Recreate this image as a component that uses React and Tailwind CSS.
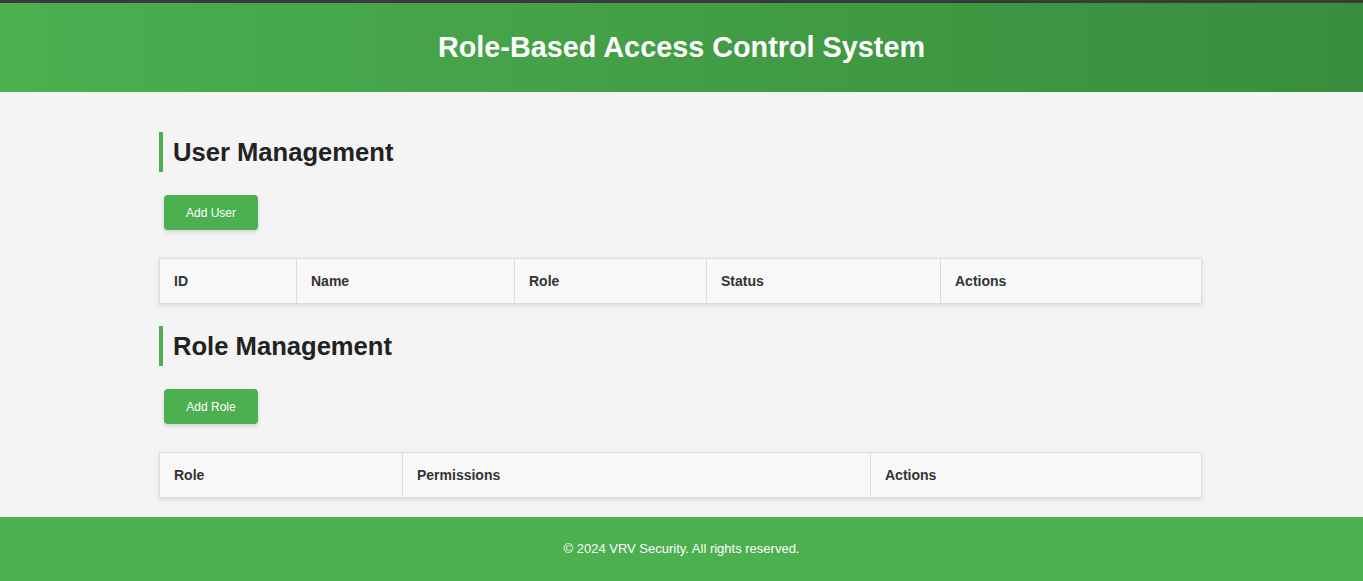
const userCols = [
  { label: 'ID', w: 'w-[137px]' },
  { label: 'Name', w: 'w-[218px]' },
  { label: 'Role', w: 'w-[192px]' },
  { label: 'Status', w: 'w-[234px]' },
  { label: 'Actions', w: '' },
]

const roleCols = [
  { label: 'Role', w: 'w-[243px]' },
  { label: 'Permissions', w: 'w-[468px]' },
  { label: 'Actions', w: '' },
]

const SectionTitle = ({ children }) => (
  <h2 className="h-[40px] flex items-center border-l-4 border-[#4CAF50] pl-[10px] text-[25.6px] font-bold text-[#222]">
    {children}
  </h2>
)

const GreenButton = ({ children }) => (
  <button className="ml-[5px] mt-[23px] h-[35px] w-[94px] rounded-[4px] bg-[#4CAF50] text-[12px] text-white shadow-[0_2px_4px_rgba(0,0,0,0.15)]">
    {children}
  </button>
)

const HeaderTable = ({ cols }) => (
  <table className="mt-[28px] w-full border-collapse bg-[#f8f8f8] shadow-[0_2px_5px_rgba(0,0,0,0.1)]">
    <thead>
      <tr>
        {cols.map((c) => (
          <th
            key={c.label}
            className={`${c.w} h-[45px] border border-[#dddddd] px-[14px] text-left text-[14px] font-bold text-[#333]`}
          >
            {c.label}
          </th>
        ))}
      </tr>
    </thead>
  </table>
)

export default function App() {
  return (
    <div
      className="min-h-[581px] flex flex-col bg-[#f4f4f4]"
      style={{ fontFamily: '"Liberation Sans", Arial, sans-serif' }}
    >
      {/* Header */}
      <header className="h-[92px] border-t-[3px] border-[#3a3a3a] bg-gradient-to-r from-[#4CAF50] to-[#388E3C] flex items-center justify-center">
        <h1 className="text-[28.8px] font-bold text-white">Role-Based Access Control System</h1>
      </header>

      {/* Main */}
      <main className="w-[1043px] ml-[159px] pt-[40px] pb-[19px] flex-1">
        <section>
          <SectionTitle>User Management</SectionTitle>
          <GreenButton>Add User</GreenButton>
          <HeaderTable cols={userCols} />
        </section>
        <section className="mt-[22px]">
          <SectionTitle>Role Management</SectionTitle>
          <GreenButton>Add Role</GreenButton>
          <HeaderTable cols={roleCols} />
        </section>
      </main>

      {/* Footer */}
      <footer className="h-[64px] bg-[#4CAF50] flex items-center justify-center">
        <p className="text-[13px] text-white">© 2024 VRV Security. All rights reserved.</p>
      </footer>
    </div>
  )
}
